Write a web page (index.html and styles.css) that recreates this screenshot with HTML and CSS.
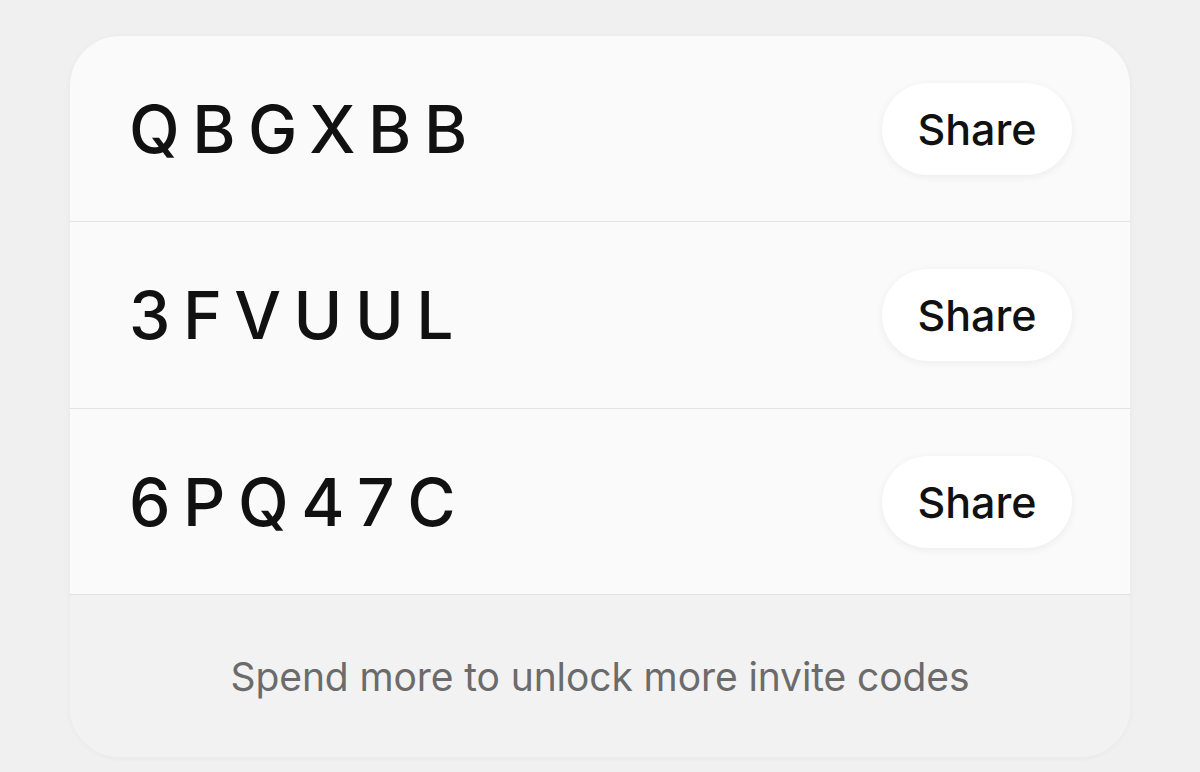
FILE: index.html
```html
<!DOCTYPE html>
<html>
<head>
<meta charset="utf-8">
<link rel="stylesheet" href="styles.css">
</head>
<body>
<div class="card">
  <div class="row first">
    <span class="code">QBGXBB</span>
    <button class="share">Share</button>
  </div>
  <div class="row middle">
    <span class="code">3FVUUL</span>
    <button class="share">Share</button>
  </div>
  <div class="row last">
    <span class="code">6PQ47C</span>
    <button class="share">Share</button>
  </div>
  <div class="footer">Spend more to unlock more invite codes</div>
</div>
</body>
</html>
```

FILE: styles.css
```css
html, body {
  margin: 0;
  padding: 0;
  background: #f0f0f0;
  font-family: Inter, "Liberation Sans", Arial, sans-serif;
}
body {
  padding: 36px 70px 0 70px;
  height: 772px;
  box-sizing: border-box;
  overflow: hidden;
}
.card {
  width: 1060px;
  background: #fafafa;
  border-radius: 50px;
  overflow: hidden;
  box-shadow: 0 1px 6px rgba(0,0,0,0.04);
  display: flex;
  flex-direction: column;
}
.row {
  height: 186px;
  display: flex;
  align-items: center;
  justify-content: space-between;
  padding: 0 58px 0 59px;
  border-bottom: 1px solid #e4e4e4;
  box-sizing: border-box;
}
.row.first { height: 186px; padding-top: 0; }
.row.middle { height: 187px; }
.row.last { height: 186px; border-bottom: 1px solid #e0e0e0; }
.code {
  font-size: 66px;
  font-weight: 500;
  letter-spacing: 12.5px;
  color: #111;
  line-height: 1;
}
.share {
  width: 190px;
  height: 92px;
  border: none;
  border-radius: 46px;
  background: #ffffff;
  box-shadow: 0 2px 8px rgba(0,0,0,0.06);
  font-family: Inter, "Liberation Sans", Arial, sans-serif;
  font-size: 43px;
  font-weight: 500;
  letter-spacing: 0;
  color: #111;
  padding: 0;
  cursor: pointer;
}
.footer {
  height: 162px;
  background: #f2f2f2;
  display: flex;
  align-items: center;
  justify-content: center;
  font-size: 39px;
  color: #6b6b6b;
  letter-spacing: -0.1px;
}
```
